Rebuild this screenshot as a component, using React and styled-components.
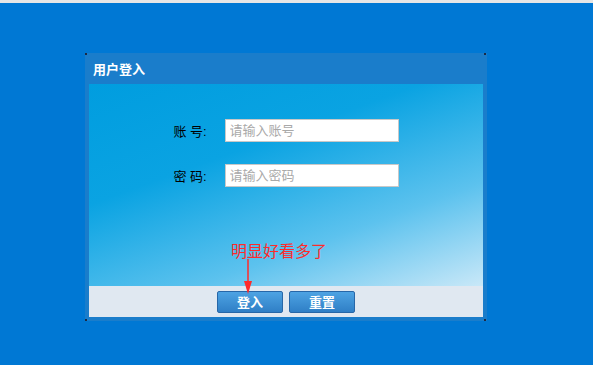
import styled, { createGlobalStyle } from 'styled-components';

const Global = createGlobalStyle`
  html, body {
    margin: 0;
    padding: 0;
    background: #0078d4;
    font-family: "Liberation Sans", "Noto Sans CJK SC", sans-serif;
  }
`;

const Page = styled.div`
  width: 593px;
  height: 365px;
  border-top: 3px solid #e6e6e6;
  box-sizing: border-box;
  background: #0078d4;
  padding: 50px 0 0 85px;
`;

const Panel = styled.div`
  position: relative;
  width: 402px;
  box-sizing: border-box;
  background: #1a7dcb;
  padding: 0 4px 4px;
`;

const Corner = styled.span`
  position: absolute;
  width: 2px;
  height: 2px;
  background: #1b2a44;
  ${p => (p.$top ? 'top: 0;' : 'bottom: 0;')}
  ${p => (p.$left ? 'left: 0;' : 'right: 1px;')}
`;

const Header = styled.div`
  height: 31px;
  display: flex;
  align-items: center;
  padding-left: 4px;
  color: #fff;
  font-size: 13px;
  font-weight: bold;
`;

const Body = styled.div`
  position: relative;
  height: 202px;
  box-sizing: border-box;
  padding-top: 35px;
  background: linear-gradient(160deg, #009ddf 0%, #0aa3e2 35%, #5cc2ee 70%, #c9e8f8 100%);
  display: flex;
  flex-direction: column;
  align-items: center;
  gap: 22px;
`;

const Row = styled.div`
  display: flex;
  align-items: center;
  gap: 20px;
`;

const Label = styled.label`
  width: 31px;
  font-size: 13px;
  color: #000;
  white-space: nowrap;
`;

const Input = styled.input`
  width: 174px;
  height: 23px;
  box-sizing: border-box;
  border: 1px solid #c8c8c8;
  padding: 0 4px;
  font-size: 13px;
  font-family: inherit;
  outline: none;
  &::placeholder {
    color: #a9a9a9;
  }
`;

const Note = styled.div`
  position: absolute;
  left: 142px;
  top: 154px;
  color: #ff2a2a;
  font-size: 16px;
`;

const Arrow = styled.svg`
  position: absolute;
  left: 154px;
  top: 175px;
  z-index: 2;
`;

const Footer = styled.div`
  height: 31px;
  background: #e0e8f1;
  display: flex;
  align-items: center;
  justify-content: center;
  gap: 6px;
`;

const Button = styled.button`
  width: 66px;
  height: 22px;
  border: 1px solid #2767a8;
  border-radius: 2px;
  background: linear-gradient(#4da3e3, #2f7fc6);
  color: #fff;
  font-size: 13px;
  font-weight: bold;
  font-family: inherit;
  padding: 0;
`;

export default function App() {
  return (
    <>
      <Global />
      <Page>
        <Panel>
          <Corner $top $left />
          <Corner $top />
          <Corner $left />
          <Corner />
          <Header>用户登入</Header>
          <Body>
            <Row>
              <Label>账 号:</Label>
              <Input placeholder="请输入账号" />
            </Row>
            <Row>
              <Label>密 码:</Label>
              <Input placeholder="请输入密码" />
            </Row>
            <Note>明显好看多了</Note>
            <Arrow width="10" height="36" viewBox="0 0 10 36">
              <line x1="5" y1="0" x2="5" y2="24" stroke="#ff2a2a" strokeWidth="1.5" />
              <polygon points="1,22 9,22 5,35" fill="#ff2a2a" />
            </Arrow>
          </Body>
          <Footer>
            <Button>登入</Button>
            <Button>重置</Button>
          </Footer>
        </Panel>
      </Page>
    </>
  );
}
